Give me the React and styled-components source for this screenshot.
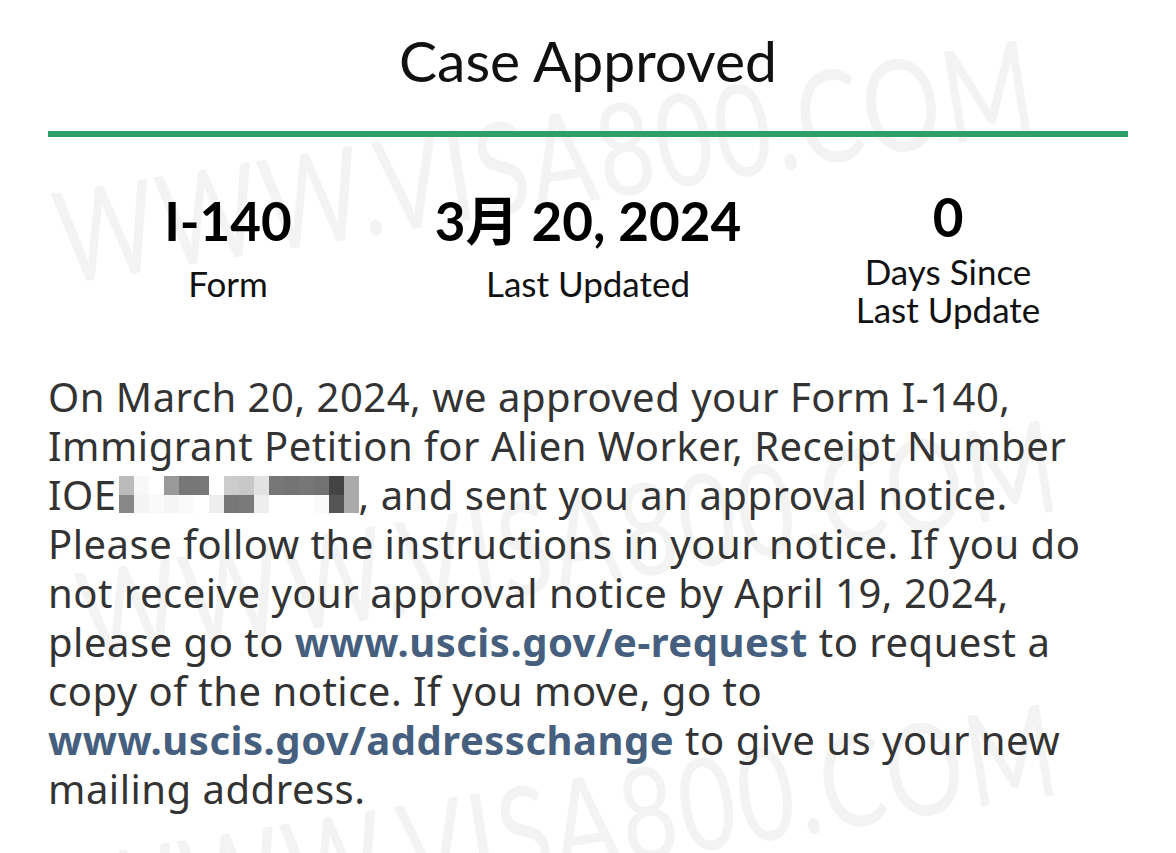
import React from "react";
import styled, { createGlobalStyle } from "styled-components";

const Global = createGlobalStyle`
  html, body { margin: 0; padding: 0; background: #ffffff; }
  body { font-family: Lato, "Noto Sans CJK SC", sans-serif; }
`;

const Page = styled.div`
  position: relative;
  width: 1176px;
  height: 853px;
  overflow: hidden;
  background: #ffffff;
`;

const Watermark = styled.div`
  position: absolute;
  left: ${(p) => p.$x}px;
  top: ${(p) => p.$y}px;
  transform: translate(-50%, -50%) rotate(-9deg) scaleX(0.76);
  font-family: Lato, sans-serif;
  font-size: 128px;
  letter-spacing: 4px;
  color: #f3f3f3;
  white-space: nowrap;
  pointer-events: none;
  user-select: none;
  z-index: 0;
`;

const Content = styled.div`
  position: relative;
  z-index: 1;
  padding: 24px 48px 0 48px;
  display: flex;
  flex-direction: column;
`;

const Title = styled.h1`
  margin: 0;
  text-align: center;
  font-family: Lato, sans-serif;
  font-weight: 400;
  font-size: 57px;
  line-height: 72px;
  color: #111111;
`;

const Divider = styled.div`
  margin-top: 35px;
  height: 6px;
  background: #2f9e6b;
`;

const Stats = styled.div`
  display: grid;
  grid-template-columns: repeat(3, 1fr);
  align-items: start;
  margin-top: 57px;
`;

const Stat = styled.div`
  display: flex;
  flex-direction: column;
  align-items: center;
  gap: ${(p) => (p.$tight ? 9 : 17)}px;
  margin-top: ${(p) => (p.$tight ? -4 : 0)}px;
`;

const Value = styled.div`
  font-family: Lato, "Noto Sans CJK SC", sans-serif;
  font-weight: 700;
  font-size: 53px;
  line-height: 53px;
  color: #000000;
  white-space: nowrap;
`;

const Label = styled.div`
  font-family: Lato, sans-serif;
  font-weight: 400;
  font-size: 35px;
  line-height: 38px;
  color: #111111;
  text-align: center;
`;

const Body = styled.p`
  margin: 44px 0 0 0;
  font-family: "Noto Sans", sans-serif;
  font-size: 40px;
  letter-spacing: 0.5px;
  line-height: 49px;
  color: #333333;
  white-space: nowrap;
`;

const Link = styled.span`
  font-weight: 700;
  color: #465f7e;
`;

const Mosaic = styled.span`
  display: inline-block;
  overflow: hidden;
  vertical-align: -3px;
  margin-left: 2px;
`;

const MosaicGrid = styled.span`
  display: grid;
  grid-template-columns: repeat(16, 15px);
  grid-template-rows: 19px 18px;
`;

const Cell = styled.span`
  background: ${(p) => p.$c};
`;

const top = ["#bbbbbb", "#f8f8f8", "#ffffff", "#999999", "#777777", "#787878", "#ffffff", "#cccccc", "#c8c8c8", "#e2e2e2", "#777777", "#747474", "#777777", "#727272", "#444444", "#aaaaaa"];
const bottom = ["#888888", "#f4f4f4", "#fafafa", "#f5f5f5", "#fafafa", "#ffffff", "#eeeeee", "#777777", "#7a7a7a", "#eeeeee", "#ffffff", "#ffffff", "#ffffff", "#fafafa", "#555555", "#aaaaaa"];

export default function App() {
  return (
    <Page>
      <Global />
      <Watermark $x={545} $y={158}>WWW.VISA800.COM</Watermark>
      <Watermark $x={568} $y={538}>WWW.VISA800.COM</Watermark>
      <Watermark $x={568} $y={822}>WWW.VISA800.COM</Watermark>
      <Content>
        <Title>Case Approved</Title>
        <Divider />
        <Stats>
          <Stat>
            <Value>I-140</Value>
            <Label>Form</Label>
          </Stat>
          <Stat>
            <Value>3月 20, 2024</Value>
            <Label>Last Updated</Label>
          </Stat>
          <Stat $tight>
            <Value>0</Value>
            <Label>
              Days Since
              <br />
              Last Update
            </Label>
          </Stat>
        </Stats>
        <Body>
          On March 20, 2024, we approved your Form I-140,
          <br />
          Immigrant Petition for Alien Worker, Receipt Number
          <br />
          IOE
          <Mosaic aria-hidden="true">
            <MosaicGrid>
              {top.map((c, i) => (
                <Cell key={"t" + i} $c={c} />
              ))}
              {bottom.map((c, i) => (
                <Cell key={"b" + i} $c={c} />
              ))}
            </MosaicGrid>
          </Mosaic>
          , and sent you an approval notice.
          <br />
          Please follow the instructions in your notice. If you do
          <br />
          not receive your approval notice by April 19, 2024,
          <br />
          please go to <Link>www.uscis.gov/e-request</Link> to request a
          <br />
          copy of the notice. If you move, go to
          <br />
          <Link>www.uscis.gov/addresschange</Link> to give us your new
          <br />
          mailing address.
        </Body>
      </Content>
    </Page>
  );
}
